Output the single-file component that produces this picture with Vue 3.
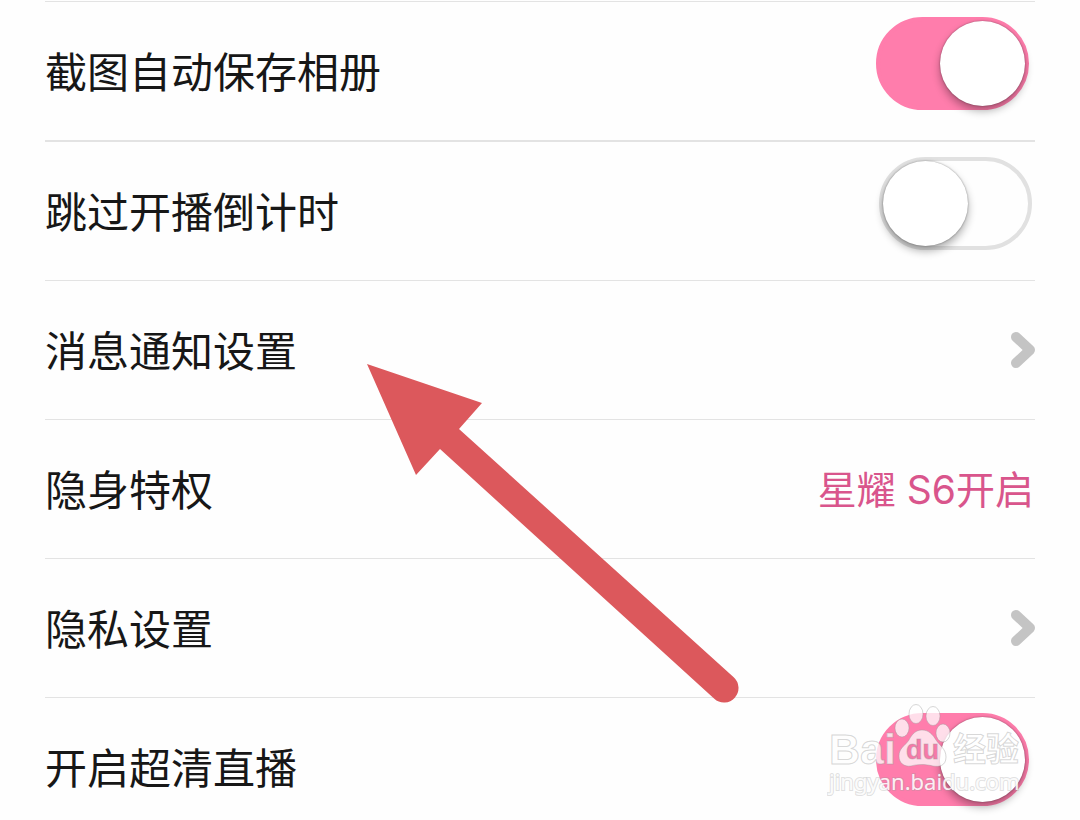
<script setup>
import { reactive } from 'vue'

const rows = reactive([
  { id: 'album', label: '截图自动保存相册', kind: 'switch', on: true },
  { id: 'countdown', label: '跳过开播倒计时', kind: 'switch', on: false },
  { id: 'notify', label: '消息通知设置', kind: 'link' },
  { id: 'stealth', label: '隐身特权', kind: 'link', note: '星耀 S6开启' },
  { id: 'privacy', label: '隐私设置', kind: 'link' },
  { id: 'hd', label: '开启超清直播', kind: 'switch', on: true },
])
</script>

<template>
  <main class="page">
    <ul class="list">
      <li v-for="row in rows" :key="row.id" class="item">
        <div v-if="row.kind === 'switch'" class="row">
          <label class="label" :for="row.id">{{ row.label }}</label>
          <input :id="row.id" v-model="row.on" class="switch" type="checkbox" role="switch" />
        </div>
        <a v-else class="row" :href="'#' + row.id">
          <span class="label">{{ row.label }}</span>
          <span v-if="row.note" class="note">{{ row.note }}</span>
          <svg v-else class="chevron" viewBox="0 0 25 36" aria-hidden="true">
            <path d="M6 5 20 18 6 31" />
          </svg>
        </a>
      </li>
    </ul>

    <svg class="arrow" viewBox="0 0 374 340" aria-hidden="true">
      <path d="M1 1 116 40 93 66 367.7 314.2A14.5 14.5 0 0 1 348.3 335.8L74 86 50 112Z" />
    </svg>

    <svg class="watermark" viewBox="0 0 200 100" aria-hidden="true">
      <text class="brand" x="2" y="64">Bai</text>
      <g class="paw">
        <ellipse cx="75" cy="28" rx="7" ry="9" />
        <ellipse cx="89" cy="14" rx="7" ry="9.500" />
        <ellipse cx="106" cy="16" rx="7" ry="9.500" />
        <ellipse cx="116" cy="33" rx="7" ry="9" />
        <path d="M95 30C102 30 106 35 109 40C113 46 119 49 119 57C119 66 112 67 106 66C98 64 91 64 84 66C77 67 72 63 72 56C72 48 78 46 82 40C85 34 89 30 95 30Z" />
      </g>
      <text class="du" x="79" y="59">du</text>
      <text class="cjk" x="126" y="61">经验</text>
      <text class="site" x="2" y="90">jingyan.baidu.com</text>
    </svg>
  </main>
</template>

<style>
body {
  margin: 0;
  background: #fefefe;
}
</style>

<style scoped>
.page {
  position: relative;
  height: 100vh;
  overflow: hidden;
  background: #fefefe;
  color: #171717;
  font-family: "Noto Sans CJK SC", sans-serif;
}

.list {
  list-style: none;
  margin: 0 45px;
  padding: 1px 0 0;
}

.item {
  border-bottom: 1px solid #e3e3e3;
}

.item:first-child {
  border-top: 1px solid #e3e3e3;
  border-bottom-width: 2px;
}

.row {
  display: flex;
  align-items: center;
  justify-content: space-between;
  height: 138px;
  color: inherit;
  text-decoration: none;
}

.label {
  padding-bottom: 2px;
  font-size: 42px;
  line-height: 60px;
}

.note {
  padding: 2px 1px 0 0;
  color: #d9558c;
  font-family: Inter, "Noto Sans CJK SC", sans-serif;
  font-size: 39px;
  line-height: 60px;
}

.chevron {
  width: 25px;
  height: 36px;
}

.chevron path {
  fill: none;
  stroke: #c4c4c4;
  stroke-width: 10;
  stroke-linecap: round;
  stroke-linejoin: round;
}

.switch {
  appearance: none;
  position: relative;
  box-sizing: border-box;
  align-self: flex-start;
  flex: none;
  width: 153px;
  height: 93px;
  margin: 15px 3px 0 0;
  border: 4px solid #e1e1e1;
  border-radius: 47px;
  background: #fefefe;
}

.switch::before {
  content: "";
  position: absolute;
  top: 0;
  left: 0;
  width: 85px;
  height: 85px;
  border-radius: 50%;
  background: #fff;
  box-shadow: 0 0 2px rgba(0, 0, 0, 0.4), 0 5px 8px rgba(0, 0, 0, 0.32);
}

.switch:checked {
  margin-right: 6px;
  border-color: #ff7dac;
  background: #ff7dac;
}

.switch:checked::before {
  right: 0;
  left: auto;
}

.arrow {
  position: absolute;
  top: 363px;
  left: 366px;
  width: 374px;
  height: 340px;
  fill: #dc585c;
  pointer-events: none;
}

.watermark {
  position: absolute;
  top: 700px;
  right: 53px;
  width: 200px;
  height: 100px;
  pointer-events: none;
}

.watermark text,
.paw {
  fill: #fff;
  fill-opacity: 0.75;
  stroke: #999;
  stroke-opacity: 0.4;
  stroke-width: 1;
}

.watermark .brand {
  font: bold 43px "Liberation Sans", sans-serif;
}

.watermark .du {
  fill: #f878a8;
  fill-opacity: 1;
  font: bold 27px "Liberation Sans", sans-serif;
}

.watermark .cjk {
  font: bold 33px "Noto Sans CJK SC", sans-serif;
}

.watermark .site {
  paint-order: stroke;
  fill-opacity: 0.9;
  stroke-width: 2;
  stroke-opacity: 0.3;
  font: 22px "Noto Sans", sans-serif;
}
</style>
